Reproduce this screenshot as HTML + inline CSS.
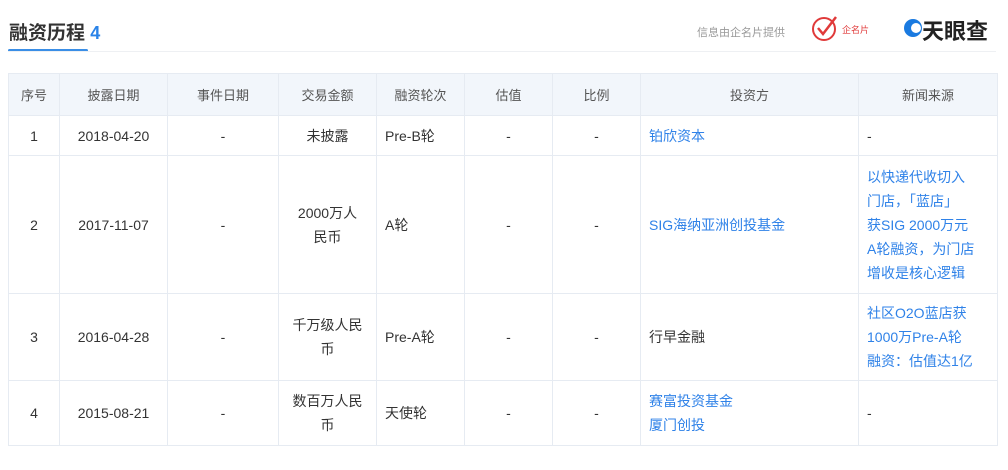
<!DOCTYPE html>
<html><head><meta charset="utf-8"><style>
body{margin:0;width:1008px;height:470px;background:#fff;font-family:"Liberation Sans","Noto Sans CJK SC",sans-serif;color:#333;overflow:hidden;position:relative}
.title{position:absolute;left:9px;top:18px;font-size:19px;font-weight:bold;color:#333}
.title span{color:#2a83e8;font-size:18px}
.ul{position:absolute;left:8px;top:49px;width:80px;height:3px;background:#3a8ee6;border-radius:2px}
.hl{position:absolute;left:8px;top:51px;width:988px;height:1px;background:#eef0f3}
.src{position:absolute;left:697px;top:24px;font-size:11px;color:#999}
.qmp{position:absolute;left:810px;top:13px}
.qmpt{position:absolute;left:842px;top:23px;font-size:9px;color:#e03a3a}
.tyc{position:absolute;left:922px;top:14px;font-size:22px;font-weight:bold;color:#222}
table{position:absolute;left:8px;top:73px;border-collapse:collapse;table-layout:fixed;font-size:14px}
td,th{border:1px solid #e6ebf2;text-align:center;padding:0}
th{background:#f2f6fb;font-weight:normal;color:#555;height:41px;font-size:13px}
td.l{text-align:left;padding-left:8px}
.a{color:#2f82e8}
.n{line-height:24px}
</style></head><body>
<div class="title">融资历程 <span>4</span></div>
<div class="ul"></div><div class="hl"></div>
<div class="src">信息由企名片提供</div>
<svg class="qmp" width="30" height="30" viewBox="0 0 30 30"><circle cx="14" cy="16" r="11" fill="none" stroke="#e03a3a" stroke-width="2"/><path d="M8 15 L13 21 L26 4" fill="none" stroke="#e03a3a" stroke-width="2.5"/></svg>
<div class="qmpt">企名片</div>
<svg style="position:absolute;left:903px;top:18px" width="20" height="20" viewBox="0 0 20 20"><circle cx="10" cy="10" r="9" fill="#1a7ae0"/><circle cx="13" cy="10" r="5" fill="#fff"/></svg>
<div class="tyc">天眼查</div>
<table>
<colgroup><col style="width:51px"><col style="width:108px"><col style="width:111px"><col style="width:98px"><col style="width:88px"><col style="width:88px"><col style="width:88px"><col style="width:218px"><col style="width:139px"></colgroup>
<tr><th>序号</th><th>披露日期</th><th>事件日期</th><th>交易金额</th><th>融资轮次</th><th>估值</th><th>比例</th><th>投资方</th><th>新闻来源</th></tr>
<tr style="height:40px"><td>1</td><td>2018-04-20</td><td>-</td><td>未披露</td><td class="l">Pre-B轮</td><td>-</td><td>-</td><td class="l a">铂欣资本</td><td class="l">-</td></tr>
<tr style="height:138px"><td>2</td><td>2017-11-07</td><td>-</td><td class="n">2000万人<br>民币</td><td class="l">A轮</td><td>-</td><td>-</td><td class="l a">SIG海纳亚洲创投基金</td><td class="l a n">以快递代收切入<br>门店，「蓝店」<br>获SIG 2000万元<br>A轮融资，为门店<br>增收是核心逻辑</td></tr>
<tr style="height:87px"><td>3</td><td>2016-04-28</td><td>-</td><td class="n">千万级人民<br>币</td><td class="l">Pre-A轮</td><td>-</td><td>-</td><td class="l">行早金融</td><td class="l a n">社区O2O蓝店获<br>1000万Pre-A轮<br>融资：估值达1亿</td></tr>
<tr style="height:65px"><td>4</td><td>2015-08-21</td><td>-</td><td class="n">数百万人民<br>币</td><td class="l">天使轮</td><td>-</td><td>-</td><td class="l a n">赛富投资基金<br>厦门创投</td><td class="l">-</td></tr>
</table>
</body></html>
